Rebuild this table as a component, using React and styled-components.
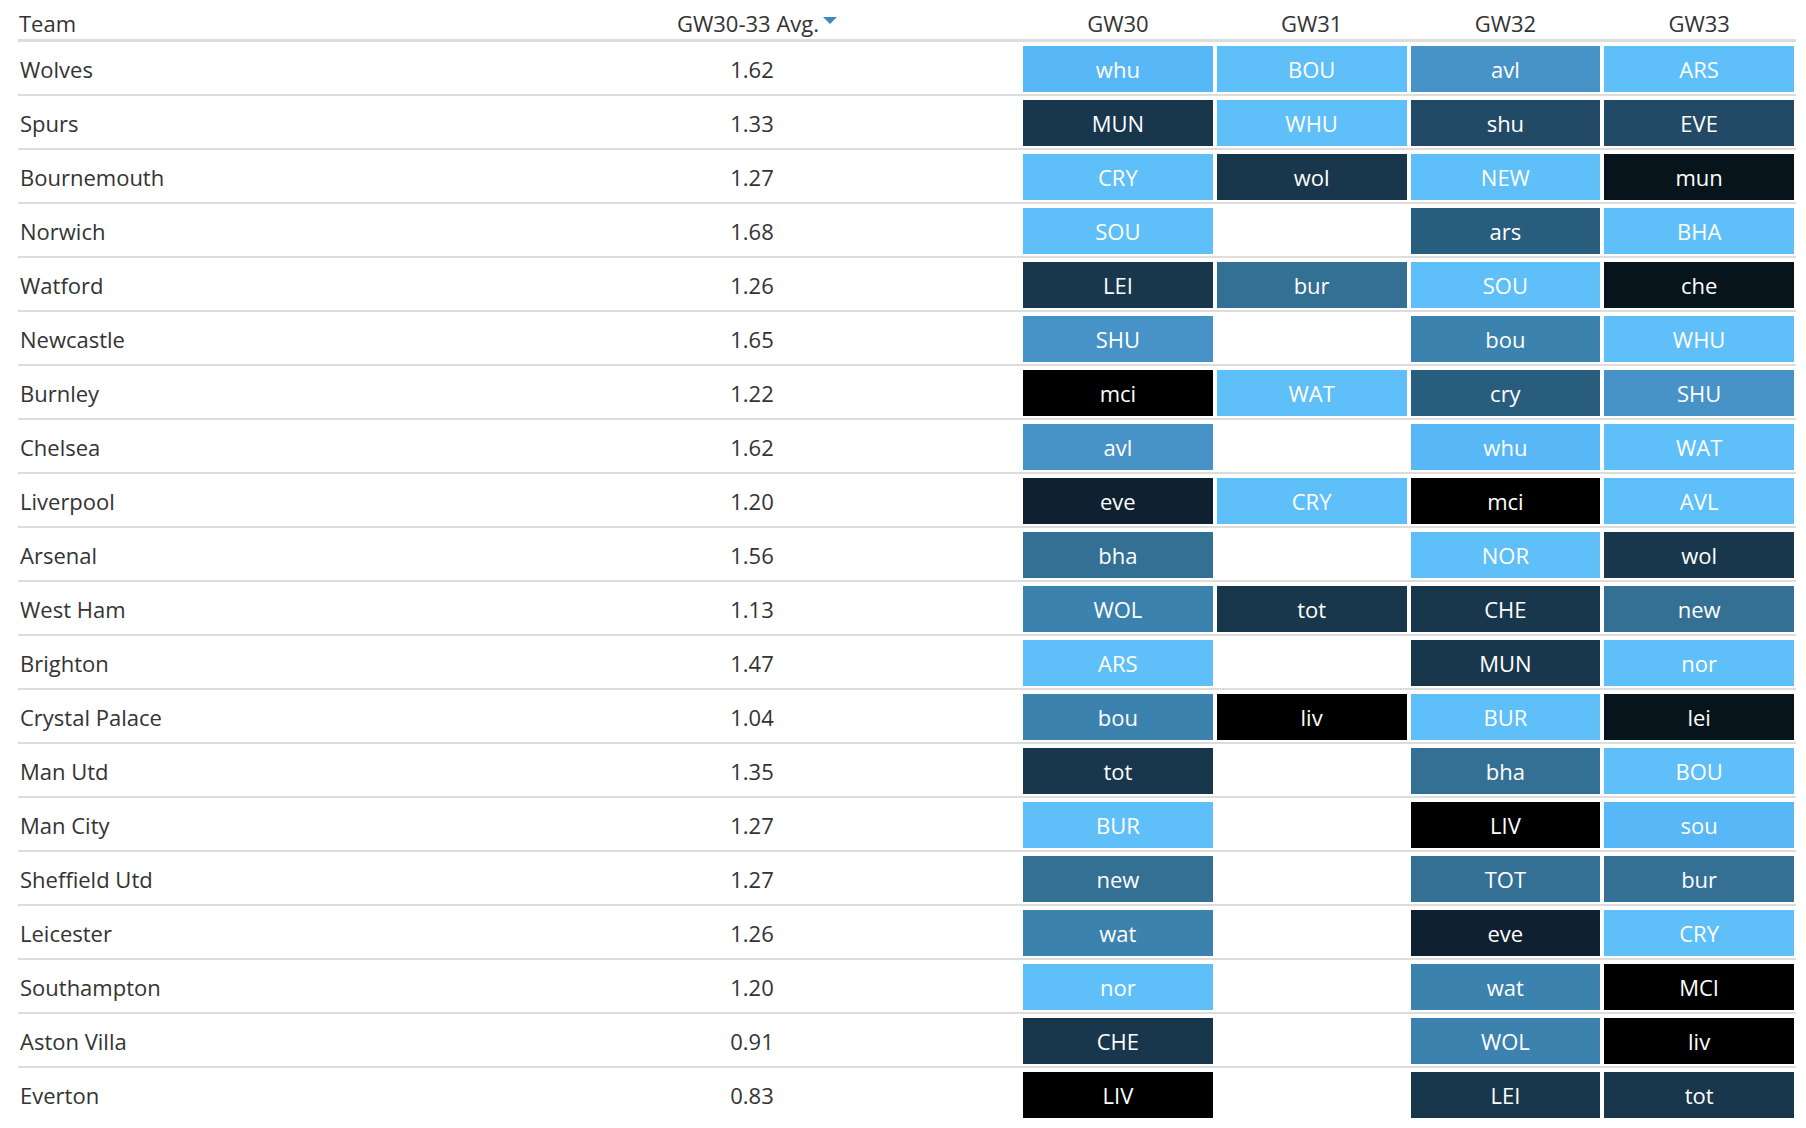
import React from "react";
import styled, { createGlobalStyle } from "styled-components";

const GlobalStyle = createGlobalStyle`
  html, body { margin: 0; padding: 0; background: #fff; }
  body { font-family: "Open Sans", "Noto Sans", sans-serif; color: #333; }
`;

const SHADES = {
  l0: "#58b7f6",
  l1: "#5fbff9",
  m1: "#4793c7",
  m2: "#3c82ae",
  m3: "#346f94",
  m4: "#295d7e",
  m5: "#224a66",
  d1: "#18364c",
  d2: "#0f2130",
  d3: "#07141b",
  k: "#000000",
};

const rows = [
  ["Wolves", "1.62", [["whu", "l0"], ["BOU", "l1"], ["avl", "m1"], ["ARS", "l1"]]],
  ["Spurs", "1.33", [["MUN", "d1"], ["WHU", "l1"], ["shu", "m5"], ["EVE", "m5"]]],
  ["Bournemouth", "1.27", [["CRY", "l1"], ["wol", "d1"], ["NEW", "l1"], ["mun", "d3"]]],
  ["Norwich", "1.68", [["SOU", "l1"], null, ["ars", "m4"], ["BHA", "l1"]]],
  ["Watford", "1.26", [["LEI", "d1"], ["bur", "m3"], ["SOU", "l1"], ["che", "d3"]]],
  ["Newcastle", "1.65", [["SHU", "m1"], null, ["bou", "m2"], ["WHU", "l1"]]],
  ["Burnley", "1.22", [["mci", "k"], ["WAT", "l1"], ["cry", "m4"], ["SHU", "m1"]]],
  ["Chelsea", "1.62", [["avl", "m1"], null, ["whu", "l0"], ["WAT", "l1"]]],
  ["Liverpool", "1.20", [["eve", "d2"], ["CRY", "l1"], ["mci", "k"], ["AVL", "l1"]]],
  ["Arsenal", "1.56", [["bha", "m3"], null, ["NOR", "l1"], ["wol", "d1"]]],
  ["West Ham", "1.13", [["WOL", "m2"], ["tot", "d1"], ["CHE", "d1"], ["new", "m3"]]],
  ["Brighton", "1.47", [["ARS", "l1"], null, ["MUN", "d1"], ["nor", "l1"]]],
  ["Crystal Palace", "1.04", [["bou", "m2"], ["liv", "k"], ["BUR", "l1"], ["lei", "d3"]]],
  ["Man Utd", "1.35", [["tot", "d1"], null, ["bha", "m3"], ["BOU", "l1"]]],
  ["Man City", "1.27", [["BUR", "l1"], null, ["LIV", "k"], ["sou", "l0"]]],
  ["Sheffield Utd", "1.27", [["new", "m3"], null, ["TOT", "m3"], ["bur", "m3"]]],
  ["Leicester", "1.26", [["wat", "m2"], null, ["eve", "d2"], ["CRY", "l1"]]],
  ["Southampton", "1.20", [["nor", "l1"], null, ["wat", "m2"], ["MCI", "k"]]],
  ["Aston Villa", "0.91", [["CHE", "d1"], null, ["WOL", "m2"], ["liv", "k"]]],
  ["Everton", "0.83", [["LIV", "k"], null, ["LEI", "d1"], ["tot", "d1"]]],
];

const Wrapper = styled.div`
  padding: 0 10px 0 18px;
`;

const Table = styled.div`
  display: flex;
  flex-direction: column;
  font-size: 22px;
`;

const Row = styled.div`
  display: grid;
  grid-template-columns: 465px 538px repeat(4, 1fr);
  border-bottom: ${(p) => (p.$head ? "3px" : "2px")} solid #dddddd;
  padding: ${(p) => (p.$head ? "8px 0 1px" : "4px 0 2px")};

  &:last-child {
    border-bottom-color: transparent;
  }
`;

const HeadCell = styled.div`
  line-height: 30px;
  color: #333;
  padding-left: ${(p) => (p.$left ? "1px" : p.$pad || "0")};
  display: flex;
  align-items: center;
  justify-content: ${(p) => (p.$left ? "flex-start" : "center")};
`;

const SortArrow = styled.span`
  display: inline-block;
  width: 0;
  height: 0;
  margin-left: 4px;
  margin-top: -6px;
  border-left: 7px solid transparent;
  border-right: 7px solid transparent;
  border-top: 7px solid #3d88bd;
`;

const TeamCell = styled.div`
  line-height: 46px;
  height: 46px;
  padding-left: 2px;
  color: #333;
  white-space: nowrap;
`;

const AvgCell = styled.div`
  line-height: 46px;
  height: 46px;
  text-align: center;
  color: #333;
`;

const FixtureSlot = styled.div`
  padding: 0 2px;
  height: 46px;
`;

const Fixture = styled.div`
  height: 46px;
  line-height: 46px;
  text-align: center;
  color: #fff;
  background: ${(p) => p.$bg};
`;

export default function App() {
  return (
    <>
      <GlobalStyle />
      <Wrapper>
        <Table>
          <Row $head>
            <HeadCell $left>Team</HeadCell>
            <HeadCell $pad="10px">
              GW30-33 Avg.
              <SortArrow />
            </HeadCell>
            <HeadCell>GW30</HeadCell>
            <HeadCell>GW31</HeadCell>
            <HeadCell>GW32</HeadCell>
            <HeadCell>GW33</HeadCell>
          </Row>
          {rows.map(([team, avg, fx]) => (
            <Row key={team}>
              <TeamCell>{team}</TeamCell>
              <AvgCell>{avg}</AvgCell>
              {fx.map((f, i) => (
                <FixtureSlot key={i}>
                  {f && <Fixture $bg={SHADES[f[1]]}>{f[0]}</Fixture>}
                </FixtureSlot>
              ))}
            </Row>
          ))}
        </Table>
      </Wrapper>
    </>
  );
}
